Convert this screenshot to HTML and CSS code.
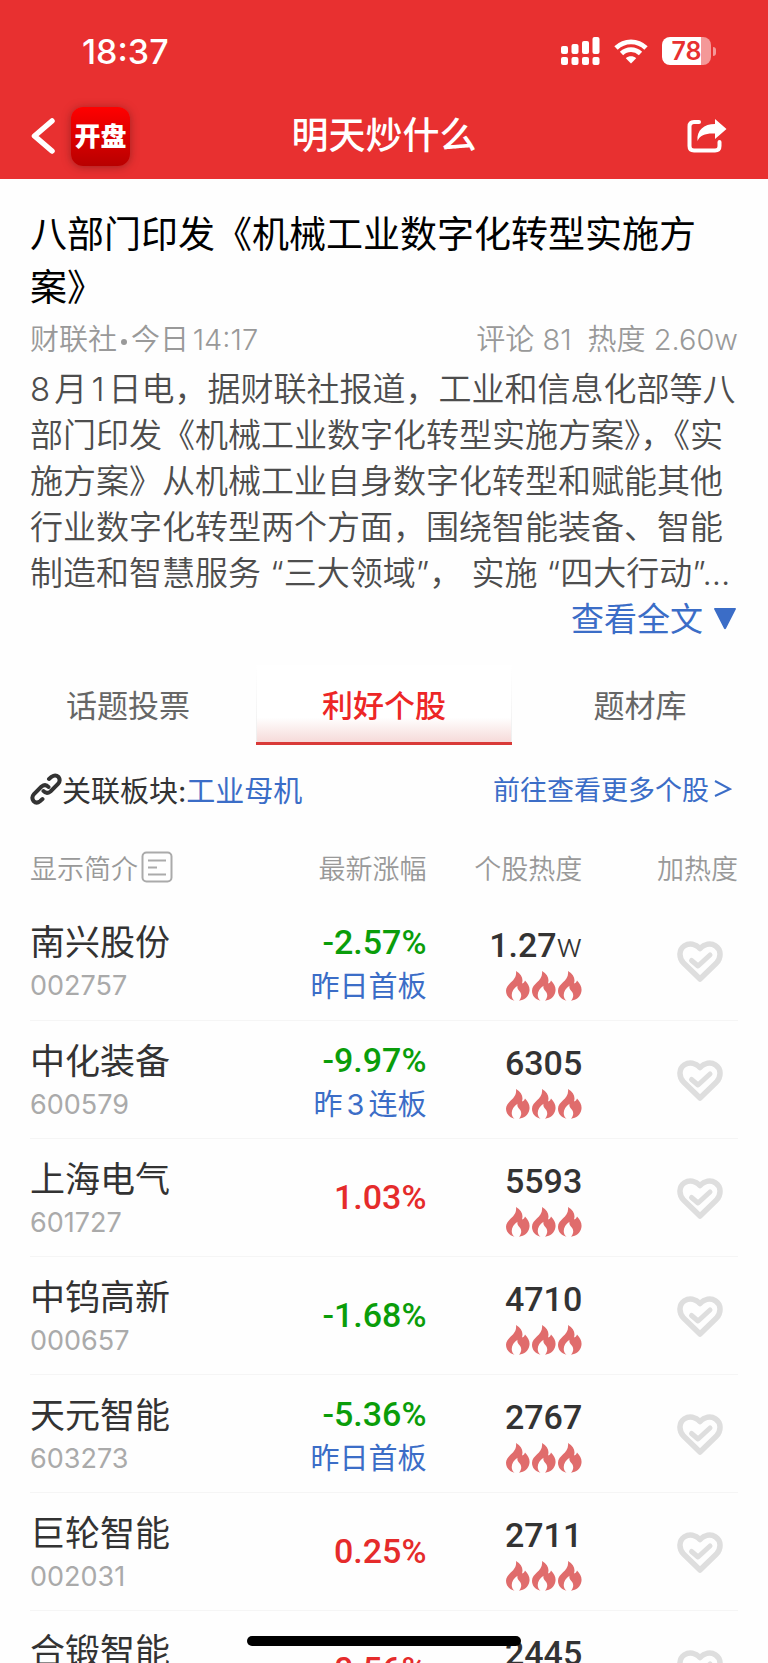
FILE: index.html
```html
<!DOCTYPE html>
<html lang="zh-CN">
<head>
<meta charset="utf-8">
<meta name="viewport" content="width=device-width, initial-scale=1">
<title>明天炒什么</title>
<link rel="stylesheet" href="styles.css">
</head>
<body>
<svg class="defs" aria-hidden="true">
  <symbol id="flame" viewBox="0 0 24 30"><path fill="#e06c6c" d="M10 0C15.500 3 17.500 7.500 16 12.500C17.800 12 18.500 11 19 9.500C22.500 13 24.300 17 23.300 21C22.300 26 18.500 29 13 29.700C16 26.500 15.800 22.500 13.300 20C11.800 18.500 11 17 11.500 14.800C7 18 5 22 6 26C6.500 28 7.300 29 8.500 29.700C3 28.500 0 24.500 0 19.800C0 12 11.500 10.500 10 0Z"/></symbol>
  <symbol id="heart" viewBox="0 0 46 41"><g fill="none" stroke="#dedede" stroke-width="5.500" stroke-linecap="round" stroke-linejoin="round"><path d="M23 38L6.500 22C1.500 16.500 1.800 8.500 7.500 4.800C12.500 1.700 18.500 3 23 7.500C27.500 3 33.500 1.700 38.500 4.800C44.200 8.500 44.500 16.500 39.500 22Z"/><path stroke-width="5" d="M14.500 19.500L21 25L33 14"/></g></symbol>
</svg>
<div class="screen">
  <header class="top">
    <div class="status">
      <span class="time">18:37</span>
      <div class="signals">
        <svg width="39" height="28" viewBox="0 0 39 28" fill="#fff" aria-hidden="true"><rect x="0" y="9" width="7" height="8" rx="2"/><rect x="10.500" y="7" width="7" height="10" rx="2"/><rect x="21" y="4" width="7" height="13" rx="2"/><rect x="31.500" y="0" width="7" height="17" rx="2"/><rect x="0" y="20" width="7" height="8" rx="2"/><rect x="10.500" y="20" width="7" height="8" rx="2"/><rect x="21" y="20" width="7" height="8" rx="2"/><rect x="31.500" y="20" width="7" height="8" rx="2"/></svg>
        <svg width="34" height="25" viewBox="0 0 34 25" aria-hidden="true"><g fill="none" stroke="#fff" stroke-width="4.800"><path d="M2 9C10.500 .7 23.500 .7 32 9"/><path d="M7.500 14.500C13 9.300 21 9.300 26.500 14.500"/></g><path fill="#fff" d="M17 24.500L11.800 19.300C14.800 16.700 19.200 16.700 22.200 19.300Z"/></svg>
        <span class="battery"><span class="level">78</span></span>
      </div>
    </div>
    <nav class="bar">
      <div class="left">
        <button class="icon-btn" aria-label="返回"><svg width="24" height="36" viewBox="0 0 24 36"><path d="M21 3L3.500 18L21 33" fill="none" stroke="#fff" stroke-width="5.500" stroke-linecap="round" stroke-linejoin="round"/></svg></button>
        <span class="logo">开盘</span>
      </div>
      <h1>明天炒什么</h1>
      <button class="icon-btn share" aria-label="分享"><svg width="40" height="36" viewBox="0 0 40 36"><path d="M12 4H7Q2.500 4 2.500 8.500V28Q2.500 32.500 7 32.500H28Q32.500 32.500 32.500 28V24" fill="none" stroke="#fff" stroke-width="4" stroke-linecap="round"/><path fill="#fff" d="M28 1L39.500 11L28 21V15.500C19 15 13 17 10.500 23C9.500 12 17 6 28 6Z"/></svg></button>
    </nav>
  </header>
  <main class="content">
    <article>
      <h2>八部门印发《机械工业数字化转型实施方<br>案》</h2>
      <div class="meta"><span class="source">财联社<i class="dot"></i>今日14:17</span><span class="counts"><span>评论 81</span><span>热度 2.60w</span></span></div>
      <p class="body">8月1日电，据财联社报道，工业和信息化部等八<br>部门印发《机械工业数字化转型实施方案》，《实<br>施方案》从机械工业自身数字化转型和赋能其他<br>行业数字化转型两个方面，围绕智能装备、智能<br>制造和智慧服务 “三大领域”， 实施 “四大行动”...</p>
      <a class="more" href="#full">查看全文<svg width="22" height="22" viewBox="0 0 22 22" aria-hidden="true"><path fill="#3b6dc7" d="M1 0H21Q22.500 0 21.700 1.500L12 20.500Q11 22 10 20.500L.3 1.500Q-.5 0 1 0Z"/></svg></a>
    </article>
  </main>
  <div class="tabs" role="tablist">
    <button role="tab" aria-selected="false">话题投票</button>
    <button role="tab" aria-selected="true" class="active">利好个股</button>
    <button role="tab" aria-selected="false">题材库</button>
  </div>
  <section class="stocks">
    <div class="related">
      <span class="sector"><svg width="32" height="32" viewBox="0 0 32 32" fill="none" stroke="#333" stroke-width="4" stroke-linecap="round" aria-hidden="true"><path d="M19 6L21.500 3.800Q25.500 1 28.500 4Q31 7.500 28 11L20.500 18.500Q16.500 21.500 13.500 18"/><path d="M12.500 26L10 28.200Q6.500 31 3.500 28Q1 24.500 4 21L11.500 13.500Q15.500 10.500 18.500 14"/></svg>关联板块:<a href="#sector">工业母机</a></span>
      <a class="all" href="#all">前往查看更多个股<svg width="18" height="18" viewBox="0 0 18 18" aria-hidden="true"><path d="M1 1L16 9L1 16" fill="none" stroke="#3b6dc7" stroke-width="2"/></svg></a>
    </div>
    <table>
      <thead><tr>
        <th class="name"><button class="intro">显示简介<svg width="32" height="32" viewBox="0 0 32 32" fill="none" stroke="#aaa" stroke-width="2" aria-hidden="true"><rect x="1.500" y="1.500" width="29" height="29" rx="4"/><path d="M7 9.500H25M7 16.500H16M7 23.500H25"/></svg></button></th>
        <th class="change">最新涨幅</th><th class="heat">个股热度</th><th class="vote">加热度</th>
      </tr></thead>
      <tbody>
        <tr><td class="stock"><div class="title">南兴股份</div><div class="code">002757</div></td><td class="down tagged">-2.57%<div class="tag">昨日首板</div></td><td class="hot">1.27<small>w</small><div class="flames"><svg><use href="#flame"/></svg><svg><use href="#flame"/></svg><svg><use href="#flame"/></svg></div></td><td class="like"><button aria-label="加热度"><svg><use href="#heart"/></svg></button></td></tr>
        <tr><td class="stock"><div class="title">中化装备</div><div class="code">600579</div></td><td class="down tagged">-9.97%<div class="tag">昨<span class="count">3</span>连板</div></td><td class="hot">6305<div class="flames"><svg><use href="#flame"/></svg><svg><use href="#flame"/></svg><svg><use href="#flame"/></svg></div></td><td class="like"><button aria-label="加热度"><svg><use href="#heart"/></svg></button></td></tr>
        <tr><td class="stock"><div class="title">上海电气</div><div class="code">601727</div></td><td class="up">1.03%</td><td class="hot">5593<div class="flames"><svg><use href="#flame"/></svg><svg><use href="#flame"/></svg><svg><use href="#flame"/></svg></div></td><td class="like"><button aria-label="加热度"><svg><use href="#heart"/></svg></button></td></tr>
        <tr><td class="stock"><div class="title">中钨高新</div><div class="code">000657</div></td><td class="down">-1.68%</td><td class="hot">4710<div class="flames"><svg><use href="#flame"/></svg><svg><use href="#flame"/></svg><svg><use href="#flame"/></svg></div></td><td class="like"><button aria-label="加热度"><svg><use href="#heart"/></svg></button></td></tr>
        <tr><td class="stock"><div class="title">天元智能</div><div class="code">603273</div></td><td class="down tagged">-5.36%<div class="tag">昨日首板</div></td><td class="hot">2767<div class="flames"><svg><use href="#flame"/></svg><svg><use href="#flame"/></svg><svg><use href="#flame"/></svg></div></td><td class="like"><button aria-label="加热度"><svg><use href="#heart"/></svg></button></td></tr>
        <tr><td class="stock"><div class="title">巨轮智能</div><div class="code">002031</div></td><td class="up">0.25%</td><td class="hot">2711<div class="flames"><svg><use href="#flame"/></svg><svg><use href="#flame"/></svg><svg><use href="#flame"/></svg></div></td><td class="like"><button aria-label="加热度"><svg><use href="#heart"/></svg></button></td></tr>
        <tr><td class="stock"><div class="title">合锻智能</div><div class="code"></div></td><td class="up">0.56%</td><td class="hot">2445<div class="flames"><svg><use href="#flame"/></svg><svg><use href="#flame"/></svg><svg><use href="#flame"/></svg></div></td><td class="like"><button aria-label="加热度"><svg><use href="#heart"/></svg></button></td></tr>
      </tbody>
    </table>
  </section>
  <div class="home-bar"></div>
</div>
</body>
</html>
```

FILE: styles.css
```css
* { box-sizing: border-box; }
body {
  margin: 0;
  background: #fefefe;
  color: #333;
  font-family: Inter, "Noto Sans CJK SC", sans-serif;
}
button {
  border: 0;
  padding: 0;
  background: none;
  color: inherit;
  font: inherit;
}
a { color: #3b6dc7; text-decoration: none; }
h1, h2, p { margin: 0; font-weight: 400; }
svg { display: block; flex: none; }
.defs { position: absolute; width: 0; height: 0; }
.screen { position: relative; height: 100vh; overflow: hidden; }

.top { background: #e83030; color: #fff; padding-bottom: 13px; }
.status {
  display: flex;
  align-items: center;
  justify-content: space-between;
  height: 102px;
  padding: 0 52px 0 82px;
}
.time { font-size: 34px; font-weight: 500; }
.signals { display: flex; align-items: center; gap: 14px; }
.battery { display: flex; align-items: center; gap: 2px; }
.battery::after {
  content: "";
  width: 3px;
  height: 9px;
  border-radius: 0 4px 4px 0;
  background: #f49898;
}
.level {
  width: 49px;
  height: 28px;
  border-radius: 8px;
  background: linear-gradient(90deg, #fff 79%, #f49898 79%);
  color: #e83030;
  font-size: 25px;
  font-weight: 600;
  line-height: 28px;
  text-align: center;
}
.bar {
  display: grid;
  grid-template-columns: 1fr auto 1fr;
  align-items: center;
  height: 64px;
  padding: 4px 31px 0;
}
.left { display: flex; align-items: center; gap: 16px; }
.logo {
  width: 59px;
  height: 59px;
  border-radius: 12px;
  background: linear-gradient(#ff0000, #b80000);
  box-shadow: 0 1px 8px rgba(90, 20, 20, .5);
  font-size: 26px;
  font-weight: 900;
  line-height: 59px;
  text-align: center;
}
.bar h1 { font-size: 37px; font-weight: 500; line-height: 54px; }
.share { justify-self: end; margin-right: 10px; }

.content { padding: 29px 30px 0; }
h2 { color: #000; font-size: 37px; line-height: 53px; }
.meta {
  display: flex;
  justify-content: space-between;
  color: #999;
  font-size: 29px;
  font-weight: 350;
  line-height: 52px;
  text-autospace: normal;
}
.source { display: flex; align-items: center; }
.dot { width: 6px; height: 6px; margin: 3px 4px 0; border-radius: 50%; background: #999; }
.counts { display: flex; gap: 16px; }
.body {
  color: #4d4d4d;
  font-size: 33px;
  font-weight: 350;
  line-height: 46px;
  white-space: nowrap;
  text-autospace: normal;
}
.more {
  display: flex;
  align-items: center;
  justify-content: flex-end;
  gap: 11px;
  padding-right: 2px;
  font-size: 33px;
  line-height: 46px;
}

.tabs { display: grid; grid-template-columns: repeat(3, 1fr); margin-top: 23px; }
.tabs button {
  height: 80px;
  border-bottom: 3px solid transparent;
  color: #666;
  font-size: 31px;
}
.tabs .active {
  border-bottom-color: #d93a38;
  background:
    linear-gradient(#fff, #eee) left / 1px 100% no-repeat,
    linear-gradient(#fff, #eee) right / 1px 100% no-repeat,
    linear-gradient(#fff 68%, #f6dad9);
  color: #ed2626;
  font-weight: 500;
}

.stocks { padding: 0 30px; }
.related { display: flex; align-items: center; justify-content: space-between; height: 87px; }
.sector { display: flex; align-items: center; font-size: 29px; }
.all { display: flex; align-items: center; gap: 5px; padding-right: 6px; font-size: 27px; }

table { width: 100%; border-collapse: collapse; table-layout: fixed; }
th {
  height: 70px;
  padding: 0;
  color: #999;
  font-size: 27px;
  font-weight: 350;
  text-align: right;
}
.name { width: 33%; text-align: left; }
.change { width: 23%; }
.heat { width: 22%; }
.vote { width: 22%; }
.intro { display: flex; align-items: center; gap: 3px; }
td {
  height: 118px;
  padding: 0;
  border-bottom: 1px solid #f5f5f5;
  vertical-align: middle;
  line-height: 42px;
}
.stock, .hot { padding-top: 3px; }
.title { font-size: 35px; line-height: 48px; }
.code { min-height: 40px; color: #aaa; font-size: 27px; font-weight: 400; line-height: 40px; }
.down, .up, .hot {
  font-family: Roboto, sans-serif;
  font-size: 34px;
  font-weight: 500;
  text-align: right;
}
.down { color: #0a9d0a; }
.up { color: #e52b2b; }
.hot small { font-size: 34px; font-weight: 300; }
.tagged { padding-top: 7px; }
.tag {
  margin-top: 3px;
  color: #3b6dc7;
  font-family: Inter, "Noto Sans CJK SC", sans-serif;
  font-size: 29px;
  font-weight: 400;
}
.count { margin: 0 4px; }
.flames { display: flex; justify-content: flex-end; gap: 2px; padding-top: 5px; }
.flames svg { width: 24px; height: 30px; }
.like { padding-top: 2px; }
.like button { display: block; margin-left: auto; margin-right: 15px; }
.like svg { width: 46px; height: 41px; }

.home-bar {
  position: absolute;
  bottom: 17px;
  left: 50%;
  width: 274px;
  height: 10px;
  margin-left: -137px;
  border-radius: 5px;
  background: #000;
}
```
